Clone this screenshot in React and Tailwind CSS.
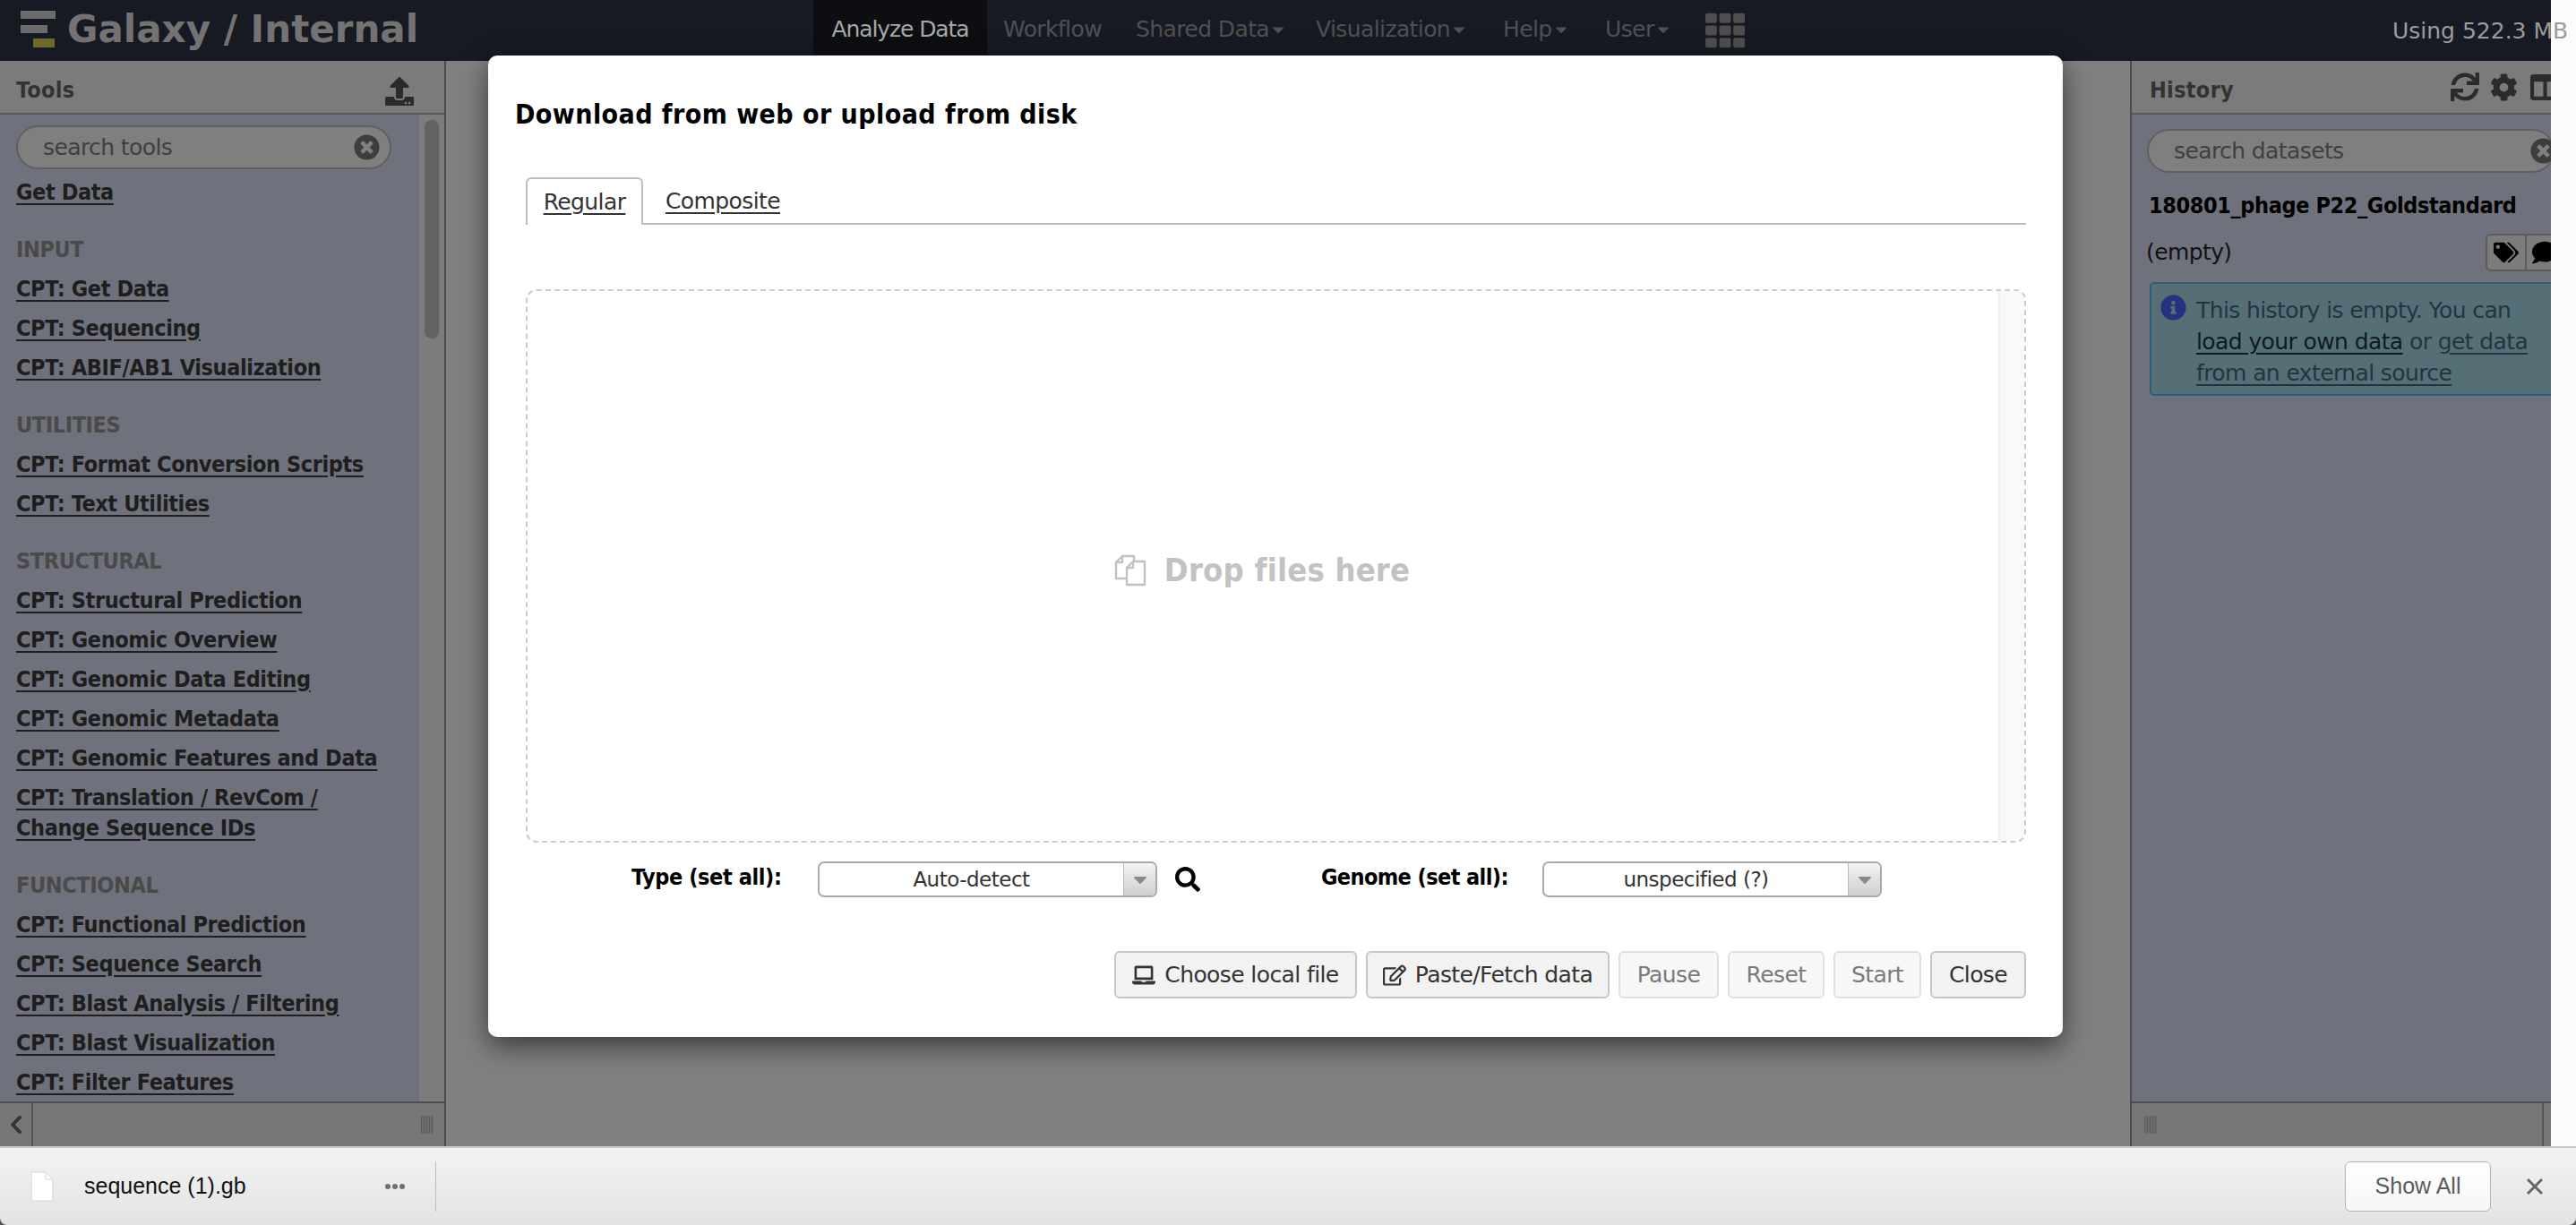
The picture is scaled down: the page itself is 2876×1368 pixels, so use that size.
import { FaUpload, FaTimesCircle, FaChevronLeft, FaSync, FaCog, FaColumns, FaTags, FaComment, FaInfoCircle, FaSearch, FaLaptop, FaRegEdit, FaTh, FaCaretDown } from 'react-icons/fa'

const sections = [
  { items: [['Get Data']] },
  { title: 'INPUT', items: [['CPT: Get Data'], ['CPT: Sequencing'], ['CPT: ABIF/AB1 Visualization']] },
  { title: 'UTILITIES', items: [['CPT: Format Conversion Scripts'], ['CPT: Text Utilities']] },
  {
    title: 'STRUCTURAL',
    items: [
      ['CPT: Structural Prediction'],
      ['CPT: Genomic Overview'],
      ['CPT: Genomic Data Editing'],
      ['CPT: Genomic Metadata'],
      ['CPT: Genomic Features and Data'],
      ['CPT: Translation / RevCom /', 'Change Sequence IDs']
    ]
  },
  {
    title: 'FUNCTIONAL',
    items: [
      ['CPT: Functional Prediction'],
      ['CPT: Sequence Search'],
      ['CPT: Blast Analysis / Filtering'],
      ['CPT: Blast Visualization'],
      ['CPT: Filter Features']
    ]
  }
]

const navItems = [
  { name: 'Workflow', className: 'ml-[18px] w-[148px]' },
  { name: 'Shared Data', caret: true, className: 'w-[201px]' },
  { name: 'Visualization', caret: true, className: 'w-[209px]' },
  { name: 'Help', caret: true, className: 'w-[114px]' },
  { name: 'User', caret: true, className: 'w-[112px]' }
]

function Grip() {
  return <div className="h-[20px] w-[14px] bg-[repeating-linear-gradient(90deg,#5c5c5c_0,#5c5c5c_1px,#6e6e6e_1px,#6e6e6e_3px)]" />
}

function SearchPill({ placeholder, className, clearClassName }) {
  return (
    <div className={`flex h-[49px] items-center rounded-full border-2 border-[#5f5f5f] bg-[#7f7f7f] ${className}`}>
      <span className="ml-[28px] text-[#3f3f3f]">{placeholder}</span>
      <FaTimesCircle className={`ml-auto shrink-0 text-[29px] text-[#3d3d3d] ${clearClassName}`} />
    </div>
  )
}

function Select({ value, className }) {
  return (
    <div className={`flex h-[40px] overflow-hidden rounded-[7px] border-2 border-[#aaaaaa] bg-white ${className}`}>
      <div className="flex flex-1 items-center justify-center text-[23px] font-normal tracking-[-0.5px] text-[#333333] font-stretch-normal">{value}</div>
      <div className="flex w-[36px] items-center justify-center border-l border-[#bbbbbb] bg-gradient-to-b from-[#f4f4f4] to-[#cfcfcf]">
        <FaCaretDown className="text-[24px] text-[#8a8a8a]" />
      </div>
    </div>
  )
}

function ActionButton({ children, disabled, className }) {
  return (
    <div className={`flex h-[53px] items-center justify-center gap-[10px] rounded-[6px] border-2 pt-[1px] text-[25px] ${disabled ? 'border-[#e0e0e0] bg-[#f7f7f7] text-[#7a7a7a]' : 'border-[#c6c6c6] bg-[#f2f2f2] text-[#333333]'} ${className}`}>
      {children}
    </div>
  )
}

function UploadDialog() {
  return (
    <div className="absolute left-[545px] top-[62px] z-10 flex h-[1096px] w-[1758px] flex-col rounded-[10px] bg-white shadow-[0_10px_30px_rgba(0,0,0,0.55)]">
      <div className="flex h-[128px] items-center pl-[30px] pt-[2px] text-[30px] font-bold tracking-[0.45px] text-black font-stretch-condensed">Download from web or upload from disk</div>

      <div className="ml-[42px] mr-[41px] mt-[8px] flex h-[53px] border-b-2 border-[#bdbdbd]">
        <div className="flex h-[53px] w-[131px] items-center justify-center rounded-t-[6px] border-2 border-b-0 border-[#bdbdbd] bg-white text-[25px] text-[#333333] underline underline-offset-4">Regular</div>
        <div className="ml-[25px] flex items-center pt-[3px] text-[25px] text-[#333333] underline underline-offset-4">Composite</div>
      </div>

      <div className="ml-[42px] mr-[41px] mt-[72px] flex h-[618px] overflow-hidden rounded-[12px] border-2 border-dashed border-[#cccccc]">
        <div className="flex flex-1 items-center justify-center gap-[20px] pr-[2px] pt-[10px] text-[#c2c2c2]">
          <svg width="36" height="36" viewBox="0 0 36 36" fill="none" stroke="#c2c2c2" strokeWidth="2.4" strokeLinejoin="round">
            <path d="M13 27 H2 V9 L9 2 H22 V9" />
            <path d="M9 2 V9 H2" />
            <path d="M14 15 L21 8 H34 V34 H14 Z" fill="#ffffff" />
            <path d="M21 8 V15 H14" />
          </svg>
          <span className="text-[36px] font-bold tracking-[0.2px] font-stretch-condensed">Drop files here</span>
        </div>
        <div className="w-[29px] border-l-2 border-[#efefef] bg-[#f9f9f9]" />
      </div>

      <div className="mt-[21px] flex h-[40px] items-center pl-[160px] text-[25px] font-bold tracking-[-0.4px] text-black font-stretch-condensed">
        <div className="w-[208px] -translate-y-[2px]">Type (set all):</div>
        <Select value="Auto-detect" className="w-[379px]" />
        <FaSearch className="ml-[20px] text-[28px]" />
        <div className="ml-[135px] w-[247px] -translate-y-[2px] tracking-[-0.6px]">Genome (set all):</div>
        <Select value="unspecified (?)" className="w-[379px]" />
      </div>

      <div className="mr-[41px] mt-[60px] flex justify-end gap-[10px]">
        <ActionButton className="w-[271px]"><FaLaptop className="text-[26px]" />Choose local file</ActionButton>
        <ActionButton className="w-[272px]"><FaRegEdit className="text-[26px]" />Paste/Fetch data</ActionButton>
        <ActionButton disabled className="w-[112px]">Pause</ActionButton>
        <ActionButton disabled className="w-[108px]">Reset</ActionButton>
        <ActionButton disabled className="w-[98px]">Start</ActionButton>
        <ActionButton className="w-[107px]">Close</ActionButton>
      </div>
    </div>
  )
}

export default function App() {
  return (
    <div className="flex h-screen w-screen flex-col overflow-hidden bg-[#555555] font-['DejaVu_Sans',sans-serif] text-[25px] tracking-[-0.6px]">
      <div className="flex min-h-0 flex-1">
        <div className="relative flex w-[2848px] flex-col">
          {/* Masthead */}
          <header className="relative flex h-[68px] shrink-0 items-start bg-[#171a23]">
            <div className="flex h-[62px] w-[908px] items-center pl-[23px]">
              <svg width="42" height="44" viewBox="0 0 42 44" className="mt-[6px]">
                <rect x="0" y="0" width="39" height="9" fill="#6c6c6c" />
                <rect x="0" y="16" width="30" height="9" fill="#6c6c6c" />
                <rect x="14" y="31" width="24" height="10" fill="#6f6826" />
              </svg>
              <span className="ml-[10px] pt-[4px] text-[42px] font-bold leading-none tracking-normal text-[#737373]">Galaxy / Internal</span>
            </div>
            <div className="flex h-[61px] w-[194px] items-center justify-center bg-[#0d0e12] pt-[5px] tracking-[-1.1px] text-[#a8a8a8]">Analyze Data</div>
            {navItems.map((item) => (
              <div key={item.name} className={`flex h-[61px] items-center pt-[5px] text-[#505050] ${item.className}`}>
                {item.name}
                {item.caret && <FaCaretDown className="text-[20px]" />}
              </div>
            ))}
            <FaTh className="mt-[12px] text-[44px] text-[#4e4e4e]" />
            <div className="absolute left-[2671px] top-0 flex h-[70px] items-center whitespace-nowrap tracking-normal text-[#9c9c9c]">Using 522.3 MB</div>
          </header>

          <div className="flex min-h-0 flex-1 bg-[#808080]">
            {/* Tools panel */}
            <aside className="flex w-[498px] flex-col border-r-2 border-[#4c4c4c]">
              <div className="flex h-[60px] shrink-0 items-center justify-between border-b-2 border-[#5a5a5a] bg-[#7b7b7b] pl-[18px] pr-[20px]">
                <span className="pt-[8px] font-bold tracking-[0.3px] text-[#333333] font-stretch-condensed">Tools</span>
                <div className="mt-[10px] flex h-[40px] w-[60px] items-center justify-center rounded-[6px] border border-[#7f7f7f]">
                  <FaUpload className="text-[32px] text-[#2b2b2b]" />
                </div>
              </div>
              <div className="flex min-h-0 flex-1">
                <div className="w-[468px] overflow-hidden bg-[#6f727c] pl-[18px] pt-[12px]">
                  <SearchPill placeholder="search tools" className="w-[419px]" clearClassName="mr-[11px]" />
                  <div className="pt-[4px] tracking-[-0.4px] font-stretch-condensed">
                    {sections.map((section, i) => (
                      <div key={i} className={i > 0 ? 'mt-[20px]' : ''}>
                        {section.title && <div className="flex h-[44px] items-center font-bold text-[#4a4a4a]">{section.title}</div>}
                        {section.items.map((lines) => (
                          <div key={lines[0]} className="py-[5px] font-bold leading-[34px] text-[#1e1e1e] underline underline-offset-4">
                            {lines.map((line) => <div key={line}>{line}</div>)}
                          </div>
                        ))}
                      </div>
                    ))}
                  </div>
                </div>
                <div className="w-[28px] bg-[#7c7c7c] pl-[6px] pt-[6px]">
                  <div className="h-[244px] w-[16px] rounded-full bg-[#626262]" />
                </div>
              </div>
              <div className="flex h-[50px] shrink-0 items-center border-t-2 border-[#4c4c4c] bg-[#777777]">
                <div className="flex h-full w-[37px] items-center justify-center border-r-2 border-[#555555]">
                  <FaChevronLeft className="text-[24px] text-[#333333]" />
                </div>
                <div className="ml-auto mr-[12px]"><Grip /></div>
              </div>
            </aside>

            <main className="flex-1" />

            {/* History panel */}
            <aside className="flex w-[470px] flex-col overflow-hidden border-l-2 border-[#4c4c4c]">
              <div className="flex h-[60px] shrink-0 items-center border-b-2 border-[#5a5a5a] bg-[#7b7b7b] pl-[20px]">
                <span className="pt-[8px] font-bold tracking-[0.3px] text-[#333333] font-stretch-condensed">History</span>
                <FaSync className="ml-auto text-[32px] text-[#2b2b2b]" />
                <FaCog className="ml-[12px] text-[31px] text-[#2b2b2b]" />
                <FaColumns className="-mr-[10px] ml-[14px] text-[33px] text-[#2b2b2b]" />
              </div>
              <div className="min-h-0 flex-1 overflow-hidden bg-[#6f727c] pt-[16px]">
                <SearchPill placeholder="search datasets" className="ml-[17px] w-[455px]" clearClassName="-mr-[4px]" />
                <div className="ml-[19px] mt-[19px] whitespace-nowrap font-bold leading-[36px] tracking-[-0.4px] text-black font-stretch-condensed">180801_phage P22_Goldstandard</div>
                <div className="ml-[16px] mt-[13px] flex h-[42px] w-[489px] items-center whitespace-nowrap text-[#111111]">
                  (empty)
                  <div className="ml-auto flex h-[42px] w-[110px] shrink-0 items-center rounded-[6px] border-2 border-[#5c5c5c] bg-[#7c7c7c]">
                    <div className="flex h-full w-[44px] items-center justify-center border-r-2 border-[#5c5c5c]"><FaTags className="text-[28px] text-black" /></div>
                    <FaComment className="ml-[6px] text-[28px] text-black" />
                  </div>
                </div>
                <div className="ml-[20px] mt-[12px] flex h-[127px] w-[470px] rounded-[5px] border-2 border-[#2a5f74] bg-[#566f77] pl-[10px] pt-[12px] text-[#223540]">
                  <FaInfoCircle className="mr-[11px] shrink-0 text-[29px] text-[#26327f]" />
                  <div className="leading-[35px]">
                    This history is empty. You can
                    <br />
                    <span className="text-[#0f1a20] underline underline-offset-4">load your own data</span> or <span className="underline underline-offset-4">get data</span>
                    <br />
                    <span className="underline underline-offset-4">from an external source</span>
                  </div>
                </div>
              </div>
              <div className="flex h-[50px] shrink-0 items-center border-t-2 border-[#4c4c4c] bg-[#777777] pl-[14px]">
                <Grip />
                <div className="ml-auto mr-[8px] h-full w-[2px] bg-[#555555]" />
              </div>
            </aside>
          </div>

          <UploadDialog />
        </div>
        <div className="flex-1 bg-[#fbfbfb]" />
      </div>

      {/* Download bar */}
      <footer className="flex h-[88px] shrink-0 items-center rounded-b-[8px] border-t-2 border-[#c9c9c9] bg-gradient-to-b from-[#f3f3f3] to-[#e3e3e3] font-['Liberation_Sans',sans-serif] tracking-normal">
        <svg width="26" height="34" viewBox="0 0 26 34" className="ml-[34px]">
          <path d="M1 1 H17 L25 9 V33 H1 Z" fill="#ffffff" stroke="#d4d4d4" strokeWidth="1" />
          <path d="M17 1 V9 H25" fill="none" stroke="#d4d4d4" strokeWidth="1" />
        </svg>
        <span className="ml-[34px] text-[25px] text-[#111111]">sequence (1).gb</span>
        <div className="ml-[155px] flex w-[22px] justify-between">
          <i className="h-[6px] w-[6px] rounded-full bg-[#6f6f6f]" />
          <i className="h-[6px] w-[6px] rounded-full bg-[#6f6f6f]" />
          <i className="h-[6px] w-[6px] rounded-full bg-[#6f6f6f]" />
        </div>
        <div className="ml-[34px] h-[56px] w-[1px] bg-[#bcbcbc]" />
        <div className="ml-auto flex h-[56px] w-[163px] items-center justify-center rounded-[6px] border border-[#b5b5b5] bg-gradient-to-b from-white to-[#f6f6f6] text-[25px] text-[#5a5a5a]">Show All</div>
        <svg width="20" height="20" viewBox="0 0 20 20" className="ml-[39px] mr-[36px]">
          <path d="M2 2 L18 18 M18 2 L2 18" stroke="#666666" strokeWidth="3" />
        </svg>
      </footer>
    </div>
  )
}
